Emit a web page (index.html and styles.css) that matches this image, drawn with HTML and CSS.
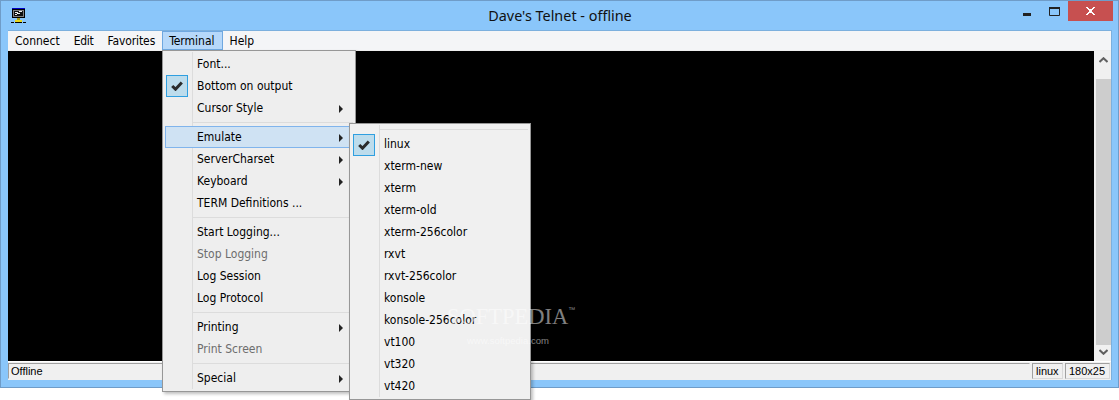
FILE: index.html
```html
<!DOCTYPE html>
<html lang="en">
<head>
<meta charset="utf-8">
<title>Dave's Telnet - offline</title>
<link rel="stylesheet" href="styles.css">
</head>
<body>
<div class="window">
  <header class="titlebar">
    <svg class="app-icon" width="16" height="16" viewBox="0 0 16 16" shape-rendering="crispEdges">
      <rect x="1" y="0" width="13" height="1" fill="#0000c8"/>
      <rect x="1" y="1" width="13" height="9" fill="#000"/>
      <rect x="2" y="2" width="11" height="7" fill="#808080"/>
      <rect x="3" y="3" width="9" height="5" fill="#111"/>
      <rect x="4" y="4" width="3" height="1" fill="#f0f0f0"/>
      <rect x="8" y="3" width="3" height="1" fill="#f0f0f0"/>
      <rect x="4" y="6" width="2" height="1" fill="#f0f0f0"/>
      <rect x="6" y="5" width="3" height="1" fill="#f0f0f0"/>
      <rect x="6" y="10" width="3" height="2" fill="#a89c10"/>
      <rect x="4" y="12" width="7" height="2" fill="#e8d820"/>
      <rect x="0" y="14" width="3" height="1" fill="#000"/>
      <rect x="4" y="14" width="7" height="1" fill="#000"/>
      <rect x="12" y="14" width="3" height="1" fill="#000"/>
    </svg>
    <div class="title">Dave's Telnet - offline</div>
    <div class="controls">
      <svg class="min" width="8" height="3" viewBox="0 0 8 3"><rect width="8" height="3" fill="#222"/></svg>
      <svg class="max" width="11" height="9" viewBox="0 0 11 9"><path d="M0.5 1.5h10v7h-10z" fill="none" stroke="#222"/><rect width="11" height="2" fill="#222"/></svg>
      <div class="close">
        <svg width="9" height="8" viewBox="0 0 9 8" shape-rendering="crispEdges"><path d="M0 0h2v1h1v1h3v-1h1v-1h2v1h-1v1h-1v1h-1v2h1v1h1v1h1v1h-2v-1h-1v-1h-3v1h-1v1h-2v-1h1v-1h1v-1h1v-2h-1v-1h-1v-1h-1z" fill="#fff"/></svg>
      </div>
    </div>
  </header>
  <div class="client">
    <nav class="menubar">
      <span class="mi">Connect</span>
      <span class="mi mi-edit">Edit</span>
      <span class="mi mi-fav">Favorites</span>
      <span class="mi active">Terminal</span>
      <span class="mi">Help</span>
    </nav>
    <div class="body">
      <div class="terminal"></div>
      <div class="scrollbar">
        <svg class="arrow" width="9" height="6" viewBox="0 0 9 6"><path d="M0.5 5 L4.5 1.2 L8.5 5" fill="none" stroke="#606060" stroke-width="2"/></svg>
        <div class="thumb"></div>
        <svg class="arrow" width="9" height="6" viewBox="0 0 9 6"><path d="M0.5 1 L4.5 4.8 L8.5 1" fill="none" stroke="#606060" stroke-width="2"/></svg>
      </div>
    </div>
    <footer class="statusbar">
      <div class="panel grow">Offline</div>
      <div class="panel p-linux">linux</div>
      <div class="panel p-size">180x25</div>
    </footer>
  </div>

  <div class="menu menu-main">
    <div class="row"><span>Font...</span></div>
    <div class="row"><i class="check"><svg width="12" height="10" viewBox="0 0 12 10"><path d="M1.2 5 L4.5 8.2 L10.8 1.5" fill="none" stroke="#2b2b2b" stroke-width="3"/></svg></i><span>Bottom on output</span></div>
    <div class="row sub"><span>Cursor Style</span></div>
    <div class="sep"></div>
    <div class="row sub hot"><span>Emulate</span></div>
    <div class="row sub"><span>ServerCharset</span></div>
    <div class="row sub"><span>Keyboard</span></div>
    <div class="row"><span>TERM Definitions ...</span></div>
    <div class="sep"></div>
    <div class="row"><span>Start Logging...</span></div>
    <div class="row off"><span>Stop Logging</span></div>
    <div class="row"><span>Log Session</span></div>
    <div class="row"><span>Log Protocol</span></div>
    <div class="sep"></div>
    <div class="row sub"><span>Printing</span></div>
    <div class="row off"><span>Print Screen</span></div>
    <div class="sep"></div>
    <div class="row sub"><span>Special</span></div>
  </div>

  <div class="menu menu-sub">
    <div class="sep top"></div>
    <div class="row"><i class="check"><svg width="12" height="10" viewBox="0 0 12 10"><path d="M1.2 5 L4.5 8.2 L10.8 1.5" fill="none" stroke="#2b2b2b" stroke-width="3"/></svg></i><span>linux</span></div>
    <div class="row"><span>xterm-new</span></div>
    <div class="row"><span>xterm</span></div>
    <div class="row"><span>xterm-old</span></div>
    <div class="row"><span>xterm-256color</span></div>
    <div class="row"><span>rxvt</span></div>
    <div class="row"><span>rxvt-256color</span></div>
    <div class="row"><span>konsole</span></div>
    <div class="row"><span>konsole-256color</span></div>
    <div class="row"><span>vt100</span></div>
    <div class="row"><span>vt320</span></div>
    <div class="row"><span>vt420</span></div>
  </div>

  <div class="mark">
    <div class="mark-name">SOFTPEDIA<sup>™</sup></div>
    <div class="mark-url">www.softpedia.com</div>
  </div>
</div>
</body>
</html>
```

FILE: styles.css
```css
* { box-sizing: border-box; }
html, body { margin: 0; height: 400px; overflow: hidden; background: #fff; }
body { font: 12px "DejaVu Sans Condensed", "DejaVu Sans", sans-serif; font-stretch: condensed; color: #000; }

.window {
  position: relative;
  width: 1119px;
  height: 388px;
  background: #8ac6fa;
  border: 1px solid #6f9cc8;
  display: flex;
  flex-direction: column;
  padding: 0 6px 7px 7px;
}

.titlebar { height: 29px; display: flex; align-items: flex-start; position: relative; flex: none; }
.app-icon { margin: 7px 0 0 3px; }
.title { position: absolute; left: 0; right: 0; top: 6px; text-align: center; font: 14.4px/18px "Noto Sans", sans-serif; color: #111; }
.controls { margin-left: auto; display: flex; align-items: flex-start; margin-right: -1px; }
.min { margin-top: 12px; margin-right: 18px; }
.max { margin-top: 6px; margin-right: 8px; }
.close { width: 45px; height: 20px; background: #c75050; display: flex; align-items: center; justify-content: center; }

.client { flex: 1; display: flex; flex-direction: column; min-height: 0; background: #f0f0f0; border: 1px solid #7cb0de; border-width: 1px 1px 0 0; }
.menubar { height: 20px; flex: none; background: #f4f5f7; display: flex; align-items: stretch; border-bottom: 1px solid #eee; }
.mi { padding: 0 6px; line-height: 18px; height: 19px; border: 1px solid transparent; }
.mi-edit { letter-spacing: -0.25px; }
.mi-fav { letter-spacing: -0.12px; }
.mi.active { background: #b6d8fa; border-color: #6fa8e0; padding-right: 7px; }

.body { flex: 1; display: flex; min-height: 0; background: #f0f0f0; }
.terminal { width: 1087px; background: #000; }
.scrollbar { width: 16px; margin-left: 1px; display: flex; flex-direction: column; align-items: center; padding-top: 6px; background: #f0f0f0; }
.thumb { width: 15px; height: 266px; background: #cdcdcd; margin-top: 16px; margin-bottom: 4px; }

.statusbar { height: 19px; flex: none; display: flex; align-items: flex-start; background: #f0f0f0; border-top: 1px solid #fff; padding: 1px 1px 0 0; font: 11px/14px "Liberation Sans", sans-serif; }
.panel { height: 16px; border: 1px solid #a0a0a0; border-right-color: #d8d8d8; border-bottom-color: #d8d8d8; padding-left: 3px; margin-right: 2px; }
.grow { flex: 1; padding-left: 2px; border-color: #a0a0a0 #f0f0f0 #f0f0f0 #a0a0a0; }
.p-linux { width: 31px; }
.p-size { width: 45px; margin-right: 0; }

.menu { position: absolute; background: #f0f0f0; border: 1px solid #979797; box-shadow: 2px 2px 3px rgba(0,0,0,.25); }
.menu::before { content: ""; position: absolute; top: 1px; bottom: 2px; width: 1px; background: #dcdcdc; }
.menu-main { left: 161px; top: 49px; width: 194px; height: 342px; padding: 2px 2px 0; background: #eee; }
.menu-main::before { left: 29px; }
.menu-sub { left: 348px; top: 122px; width: 182px; height: 277px; padding: 2px 2px 0; }
.menu-sub::before { left: 29px; }

.row { position: relative; height: 22px; line-height: 20px; padding-left: 31px; border: 1px solid transparent; }
.row span { position: relative; }
.row.off { color: #6d6d6d; }
.row.hot { background: #cfe2f3; border-color: #80b4ec; }
.row.sub::after { content: ""; position: absolute; right: 9px; top: 7px; border-left: 4px solid #222; border-top: 4px solid transparent; border-bottom: 4px solid transparent; }
.sep { height: 7px; margin-left: 28px; position: relative; }
.sep::after { content: ""; position: absolute; left: 0; right: 0; top: 3px; height: 1px; background: #dcdcdc; }
.sep.top { height: 7px; }
.sep.top::after { top: 3px; }

.check { position: absolute; left: 0; top: -1px; width: 22px; height: 22px; background: #bddcec; border: 1px solid #2f9fe0; display: flex; align-items: center; justify-content: center; }
.menu-sub .check { top: 0; }

.mark { position: absolute; left: 446px; top: 303px; color: rgba(255,255,255,.5); pointer-events: none; }
.mark-name { font: 22.5px/26px "Liberation Serif", serif; white-space: nowrap; }
.mark-name sup { font: 7px/1 "Liberation Sans", sans-serif; vertical-align: 12px; }
.mark-url { font: 9.5px/14px "Liberation Sans", sans-serif; margin-top: 4px; margin-left: 20px; }
```
